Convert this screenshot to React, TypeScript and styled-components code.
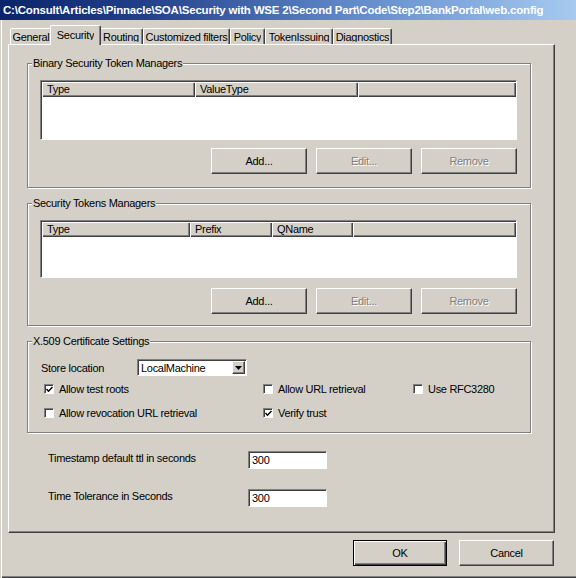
import React from 'react';
import styled, { createGlobalStyle } from 'styled-components';

const GlobalStyle = createGlobalStyle`
  html, body { margin: 0; padding: 0; background: #d4d0c8; }
  body { font-family: "Liberation Sans", Arial, sans-serif; font-size: 11px; letter-spacing: -0.3px; color: #000; }
  * { box-sizing: border-box; }
`;

const Window = styled.div`
  width: 576px;
  height: 578px;
  background: #d4d0c8;
  display: flex;
  flex-direction: column;
  box-shadow: inset 1px 0 #d4d0c8, inset 2px 0 #fff, inset 0 -1px #404040, inset 0 -2px #808080;
  overflow: hidden;
`;

const TitleBar = styled.div`
  height: 20px;
  flex: none;
  padding-left: 3px;
  background: linear-gradient(90deg, #0a246a 0%, #22408a 25%, #5f88c8 60%, #a6caf0 100%);
  color: #fff;
  font-weight: bold;
  font-size: 11.5px;
  letter-spacing: -0.2px;
  line-height: 20px;
  white-space: nowrap;
  overflow: hidden;
`;

const Body = styled.div`
  flex: 1;
  display: flex;
  flex-direction: column;
  padding: 5px 21px 0 8px;
`;

const TabStrip = styled.div`
  height: 19px;
  display: flex;
  align-items: flex-end;
  padding-left: 2px;
  position: relative;
  z-index: 1;
`;

const Tab = styled.div<{ $w: number; $active?: boolean }>`
  width: ${(p) => (p.$active ? p.$w + 4 : p.$w)}px;
  height: ${(p) => (p.$active ? 20 : 16)}px;
  margin: 0 ${(p) => (p.$active ? -2 : 0)}px ${(p) => (p.$active ? -1 : 0)}px;
  position: relative;
  z-index: ${(p) => (p.$active ? 2 : 0)};
  background: #d4d0c8;
  border-top: 1px solid #fff;
  border-left: 1px solid #fff;
  border-right: 1px solid #404040;
  border-top-left-radius: 2px;
  border-top-right-radius: 2px;
  box-shadow: inset -1px 0 #808080;
  text-align: center;
  padding-top: ${(p) => (p.$active ? 2 : 1)}px;
  white-space: nowrap;
  overflow: hidden;
`;

const TabLabel = styled.span`
  display: inline-block;
  height: 12px;
  line-height: 14px;
  overflow: hidden;
  vertical-align: top;
`;

const Panel = styled.div`
  width: 547px;
  height: 489px;
  flex: none;
  border-top: 1px solid #fff;
  border-left: 1px solid #fff;
  border-right: 1px solid #404040;
  border-bottom: 1px solid #404040;
  box-shadow: inset -1px -1px #808080;
  padding: 18px 23px 0 18px;
  display: flex;
  flex-direction: column;
`;

const Group = styled.div<{ $mt: number; $pad: string }>`
  position: relative;
  margin-top: ${(p) => p.$mt}px;
  border: 1px solid #808080;
  box-shadow: inset 1px 1px #fff, 1px 1px #fff;
  padding: ${(p) => p.$pad};
`;

const Caption = styled.span`
  position: absolute;
  top: -7px;
  left: 4px;
  padding: 0 1px;
  line-height: 13px;
  background: #d4d0c8;
`;

const ListView = styled.div<{ $h: number }>`
  height: ${(p) => p.$h}px;
  background: #fff;
  border: 1px solid;
  border-color: #808080 #fff #fff #808080;
  box-shadow: inset 1px 1px #404040;
  padding: 1px 0 0 1px;
`;

const Header = styled.div`
  height: 15px;
  display: flex;
  background: #d4d0c8;
`;

const HeaderCell = styled.div<{ $w?: number }>`
  ${(p) => (p.$w ? `width: ${p.$w}px; flex: none;` : 'flex: 1;')}
  height: 15px;
  line-height: 14px;
  padding-left: 5px;
  box-shadow: inset 1px 1px #fff, inset -1px -1px #404040, inset -2px -2px #808080;
  white-space: nowrap;
  overflow: hidden;
`;

const ButtonRow = styled.div<{ $mt: number }>`
  display: flex;
  justify-content: flex-end;
  gap: 9px;
  margin-top: ${(p) => p.$mt}px;
`;

const Button = styled.button<{ $w?: number; $default?: boolean }>`
  width: ${(p) => p.$w ?? 96}px;
  height: 26px;
  padding: 0;
  font-family: "Liberation Sans", Arial, sans-serif;
  font-size: 11px;
  letter-spacing: -0.3px;
  color: #000;
  background: #d4d0c8;
  border: 1px solid;
  border-color: ${(p) => (p.$default ? '#000' : '#fff #404040 #404040 #fff')};
  box-shadow: ${(p) =>
    p.$default
      ? 'inset 1px 1px #fff, inset -1px -1px #404040, inset -2px -2px #808080'
      : 'inset -1px -1px #808080'};
  &:disabled {
    color: #808080;
    text-shadow: 1px 1px #fff;
  }
`;

const StoreRow = styled.div`
  display: flex;
  align-items: center;
  height: 17px;
`;

const StoreLabel = styled.span`
  width: 96px;
`;

const Select = styled.div`
  width: 110px;
  height: 17px;
  background: #fff;
  border: 1px solid;
  border-color: #808080 #fff #fff #808080;
  box-shadow: inset 1px 1px #404040;
  padding: 1px 1px 1px 3px;
  display: flex;
  align-items: center;
  justify-content: space-between;
`;

const DropButton = styled.div`
  width: 13px;
  height: 13px;
  background: #d4d0c8;
  border: 1px solid;
  border-color: #fff #404040 #404040 #fff;
  box-shadow: inset -1px -1px #808080;
  display: flex;
  align-items: center;
  justify-content: center;
`;

const CheckGrid = styled.div`
  display: grid;
  grid-template-columns: 219px 150px 1fr;
  grid-auto-rows: 16px;
  row-gap: 8px;
  margin: 5px 0 0 3px;
`;

const CheckItem = styled.label`
  display: flex;
  align-items: center;
  gap: 5px;
  white-space: nowrap;
`;

const Box = styled.span`
  width: 10px;
  height: 10px;
  flex: none;
  background: #fff;
  border: 1px solid;
  border-color: #808080 #fff #fff #808080;
  box-shadow: inset 1px 1px #404040;
  display: flex;
  align-items: center;
  justify-content: center;
`;

const FieldRow = styled.div<{ $mt: number }>`
  display: flex;
  align-items: center;
  margin-top: ${(p) => p.$mt}px;
  padding-left: 21px;
`;

const FieldLabel = styled.span`
  width: 200px;
  margin-top: -4px;
`;

const TextInput = styled.div`
  width: 79px;
  height: 18px;
  background: #fff;
  border: 1px solid;
  border-color: #808080 #fff #fff #808080;
  box-shadow: inset 1px 1px #404040;
  padding: 0 0 0 3px;
  line-height: 17px;
`;

const Footer = styled.div`
  display: flex;
  justify-content: flex-end;
  gap: 12px;
  padding: 7px 1px 0 0;
`;

const Check: React.FC<{ checked?: boolean; label: string }> = ({ checked, label }) => (
  <CheckItem>
    <Box>
      {checked && (
        <svg width="7" height="7" viewBox="0 0 7 7">
          <polyline points="0.5,3 2.5,5.2 6.5,1" fill="none" stroke="#000" strokeWidth="1.4" />
        </svg>
      )}
    </Box>
    <span>{label}</span>
  </CheckItem>
);

const tabs: { label: string; w: number }[] = [
  { label: 'General', w: 42 },
  { label: 'Security', w: 47 },
  { label: 'Routing', w: 44 },
  { label: 'Customized filters', w: 87 },
  { label: 'Policy', w: 35 },
  { label: 'TokenIssuing', w: 68 },
  { label: 'Diagnostics', w: 59 },
];

export default function App() {
  return (
    <>
      <GlobalStyle />
      <Window>
        <TitleBar>
          C:\Consult\Articles\Pinnacle\SOA\Security with WSE 2\Second Part\Code\Step2\BankPortal\web.config
        </TitleBar>
        <Body>
          <TabStrip>
            {tabs.map((t) => (
              <Tab key={t.label} $w={t.w} $active={t.label === 'Security'}>
                <TabLabel>{t.label}</TabLabel>
              </Tab>
            ))}
          </TabStrip>
          <Panel>
            <Group $mt={0} $pad="16px 13px 13px 12px">
              <Caption>Binary Security Token Managers</Caption>
              <ListView $h={60}>
                <Header>
                  <HeaderCell $w={153}>Type</HeaderCell>
                  <HeaderCell $w={163}>ValueType</HeaderCell>
                  <HeaderCell />
                </Header>
              </ListView>
              <ButtonRow $mt={8}>
                <Button>Add...</Button>
                <Button disabled>Edit...</Button>
                <Button disabled>Remove</Button>
              </ButtonRow>
            </Group>
            <Group $mt={15} $pad="16px 13px 11px 12px">
              <Caption>Security Tokens Managers</Caption>
              <ListView $h={58}>
                <Header>
                  <HeaderCell $w={148}>Type</HeaderCell>
                  <HeaderCell $w={82}>Prefix</HeaderCell>
                  <HeaderCell $w={81}>QName</HeaderCell>
                  <HeaderCell />
                </Header>
              </ListView>
              <ButtonRow $mt={10}>
                <Button>Add...</Button>
                <Button disabled>Edit...</Button>
                <Button disabled>Remove</Button>
              </ButtonRow>
            </Group>
            <Group $mt={15} $pad="17px 13px 11px 13px">
              <Caption>X.509 Certificate Settings</Caption>
              <StoreRow>
                <StoreLabel>Store location</StoreLabel>
                <Select>
                  <span>LocalMachine</span>
                  <DropButton>
                    <svg width="7" height="4" viewBox="0 0 7 4">
                      <polygon points="0,0 7,0 3.5,4" fill="#000" />
                    </svg>
                  </DropButton>
                </Select>
              </StoreRow>
              <CheckGrid>
                <Check checked label="Allow test roots" />
                <Check label="Allow URL retrieval" />
                <Check label="Use RFC3280" />
                <Check label="Allow revocation URL retrieval" />
                <Check checked label="Verify trust" />
              </CheckGrid>
            </Group>
            <FieldRow $mt={18}>
              <FieldLabel>Timestamp default ttl in seconds</FieldLabel>
              <TextInput>300</TextInput>
            </FieldRow>
            <FieldRow $mt={20}>
              <FieldLabel>Time Tolerance in Seconds</FieldLabel>
              <TextInput>300</TextInput>
            </FieldRow>
          </Panel>
          <Footer>
            <Button $w={94} $default>OK</Button>
            <Button $w={95}>Cancel</Button>
          </Footer>
        </Body>
      </Window>
    </>
  );
}
